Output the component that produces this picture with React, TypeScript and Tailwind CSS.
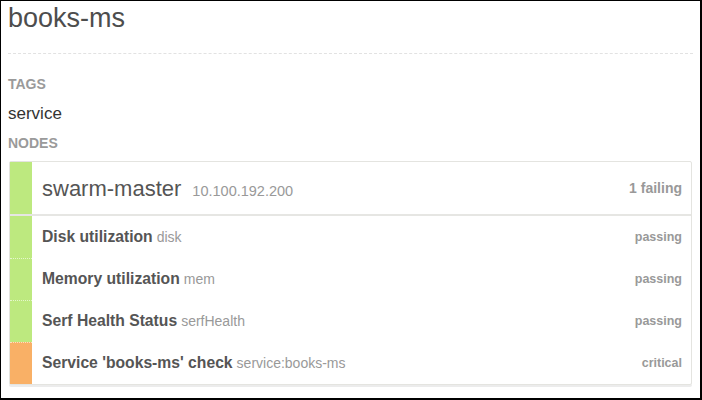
import React from "react";

const GREEN = "bg-[#bde97f]";
const ORANGE = "bg-[#f9b066]";

type Check = { name: string; id: string; status: string; bar: string };

const checks: Check[] = [
  { name: "Disk utilization", id: "disk", status: "passing", bar: GREEN },
  { name: "Memory utilization", id: "mem", status: "passing", bar: GREEN },
  { name: "Serf Health Status", id: "serfHealth", status: "passing", bar: GREEN },
  { name: "Service 'books-ms' check", id: "service:books-ms", status: "critical", bar: ORANGE },
];

export default function App() {
  return (
    <div
      className="w-[702px] h-[400px] bg-white border-l border-t border-r-2 border-b-2 border-black px-[7px] overflow-hidden"
      style={{ fontFamily: '"Liberation Sans", Arial, Helvetica, sans-serif' }}
    >
      <h1 className="pt-[2px] pb-[20px] text-[27px] leading-[30px] text-[#4d4d4d] border-b border-dashed border-[#e2e2e2]">
        books-ms
      </h1>
      <div className="mt-[20px] text-[14px] leading-[20px] font-bold text-[#9a9a9a]">TAGS</div>
      <div className="mt-[8px] text-[17px] leading-[24px] text-[#333]">service</div>
      <div className="mt-[7px] text-[14px] leading-[20px] font-bold text-[#9a9a9a]">NODES</div>

      <div className="mt-[8px] ml-[1px] mr-[1px] border border-[#e4e4e0] shadow-[0_2px_0_#ececec] rounded-[2px] flex flex-col">
        <div className="flex h-[54px] border-b-2 border-[#e6e6e3]">
          <div className={`w-[22px] ${GREEN}`} />
          <div className="flex-1 flex items-center justify-between pl-[10px] pr-[9px]">
            <div className="flex items-baseline">
              <span className="text-[22px] text-[#555]">swarm-master</span>
              <span className="ml-[11px] text-[14.5px] text-[#999]">10.100.192.200</span>
            </div>
            <span className="text-[14px] font-bold text-[#999]">1 failing</span>
          </div>
        </div>
        {checks.map((c, i) => (
          <div key={i} className="flex h-[42px]">
            <div className={`w-[22px] ${c.bar} ${i > 0 ? "border-t border-dotted border-white/60" : ""}`} />
            <div className="flex-1 flex items-center justify-between pl-[10px] pr-[9px]">
              <div className="flex items-baseline">
                <span className="text-[15.7px] font-bold text-[#555]">{c.name}</span>
                <span className="ml-[4px] text-[14px] text-[#999]">{c.id}</span>
              </div>
              <span className="text-[12.5px] font-bold text-[#999]">{c.status}</span>
            </div>
          </div>
        ))}
      </div>
    </div>
  );
}
